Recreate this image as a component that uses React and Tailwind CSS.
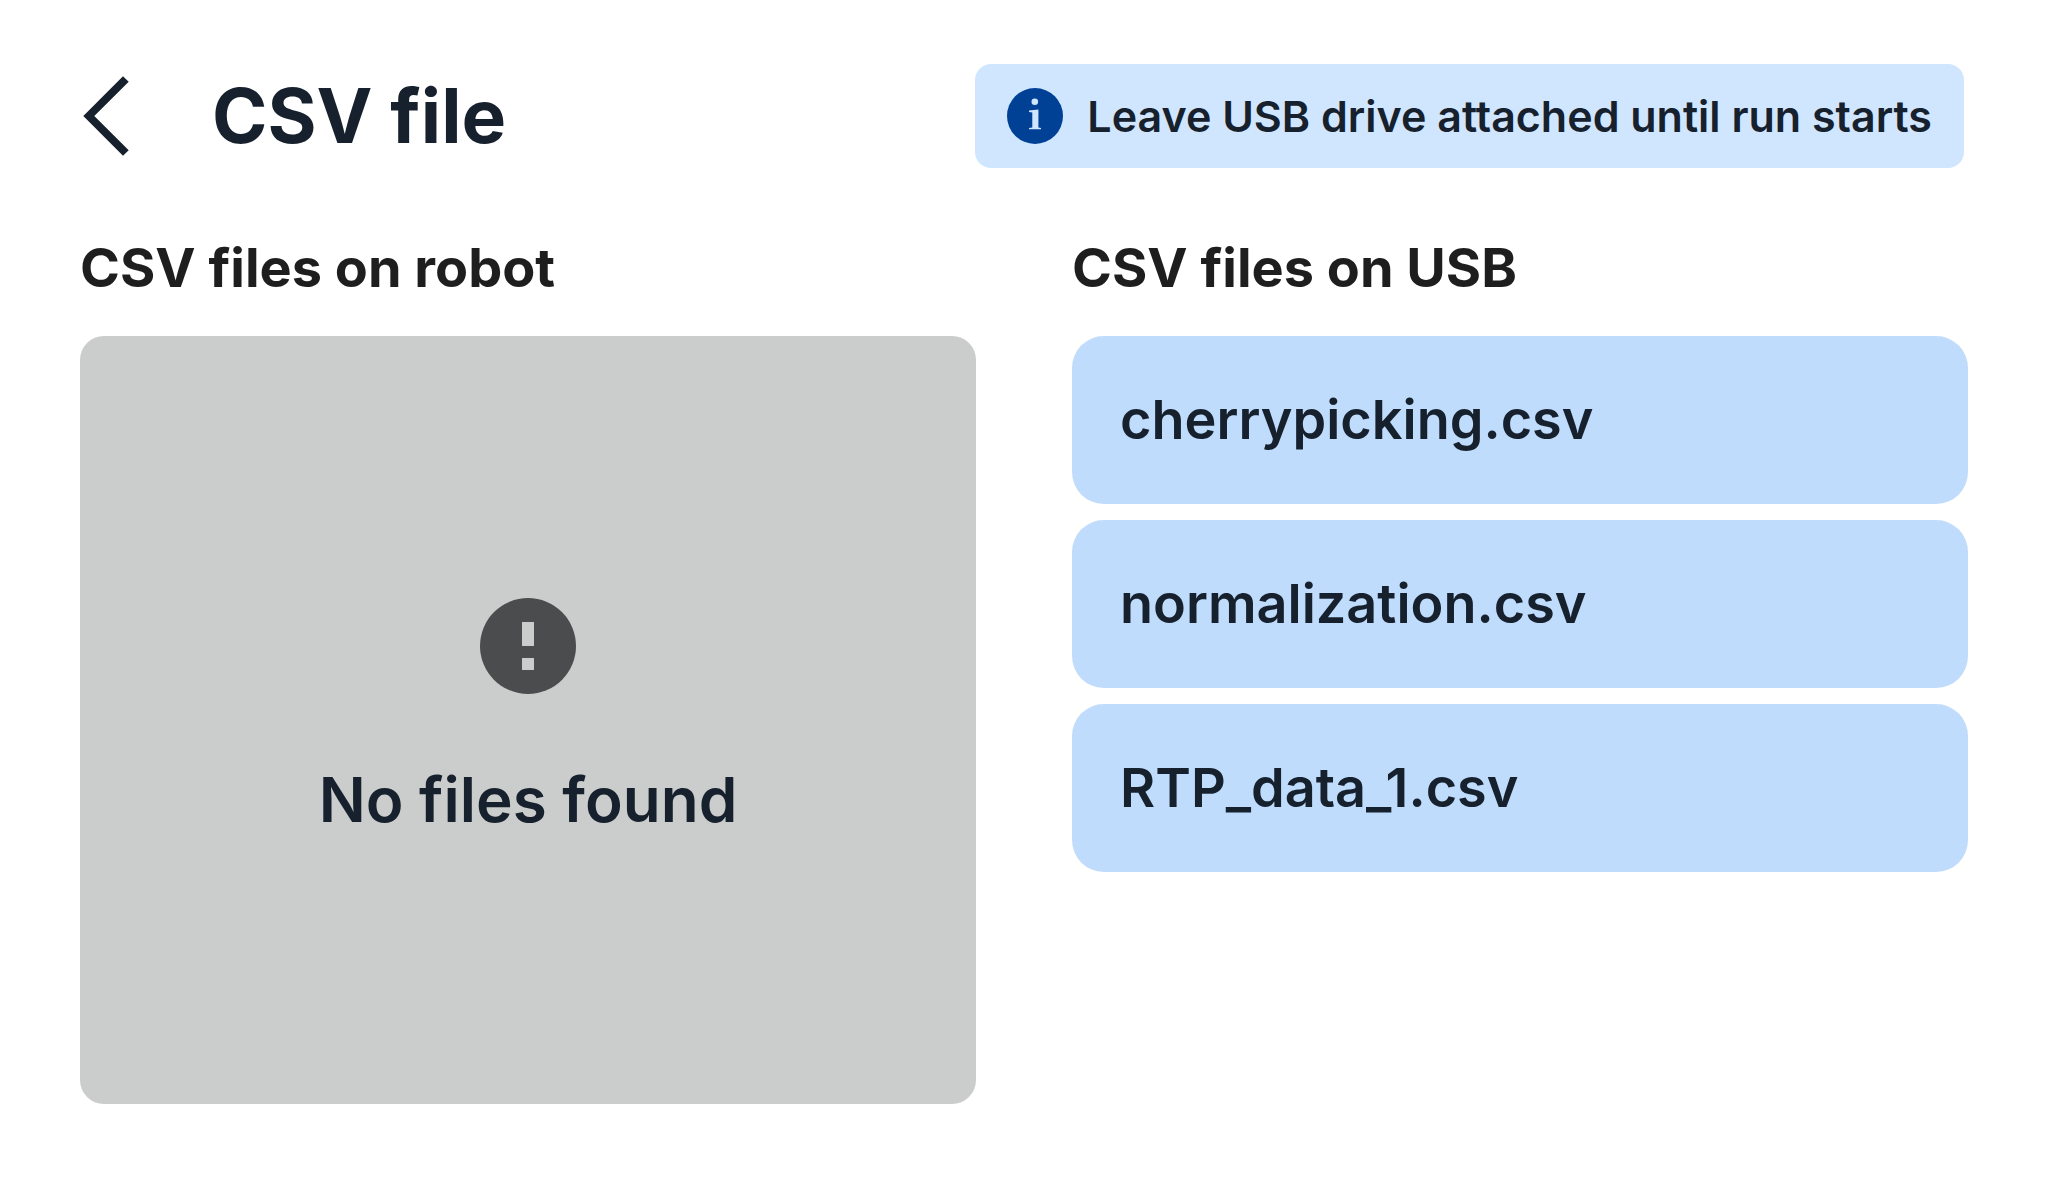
const usbFiles = ['cherrypicking.csv', 'normalization.csv', 'RTP_data_1.csv'];

function ChevronLeft() {
  return (
    <svg className="h-24 w-24" viewBox="0 0 96 96" fill="#16212d" aria-hidden="true">
      <path d="M43 8.3 48.7 13.8 14.3 48 48.7 82.2 43 87.7 3.3 48Z" />
    </svg>
  );
}

function InfoIcon() {
  return (
    <svg className="size-14 shrink-0" viewBox="0 0 56 56" aria-hidden="true">
      <circle cx="28" cy="28" r="28" fill="#004196" />
      <g fill="#d0e6ff">
        <circle cx="27.8" cy="13.8" r="3.3" />
        <path d="M22 22.6 31.4 21.6V39.4L34 40V41.2H22V40L25.3 39.4V24.6L22 24Z" />
      </g>
    </svg>
  );
}

function AlertIcon() {
  return (
    <svg className="size-24" viewBox="0 0 96 96" aria-hidden="true">
      <circle cx="48" cy="48" r="48" fill="#4a4c4e" />
      <path d="M42 24h12v24H42zM42 60h12v12H42z" fill="#cbcccc" />
    </svg>
  );
}

export default function App() {
  return (
    <main className="flex min-h-screen flex-col bg-white px-20 pt-16 pb-20 font-['Inter',sans-serif] text-[#16212d]">
      <header className="mb-16 flex items-center justify-between pr-1">
        <div className="flex items-center gap-9">
          <button type="button" aria-label="Back">
            <ChevronLeft />
          </button>
          <h1 className="text-[75px] leading-[96px] font-bold">CSV file</h1>
        </div>
        <div role="status" className="flex items-center gap-6 rounded-2xl bg-[#d0e6ff] px-8 py-6">
          <InfoIcon />
          <p className="text-[43px] leading-14 font-semibold">Leave USB drive attached until run starts</p>
        </div>
      </header>
      <div className="grid flex-1 grid-cols-2 gap-24">
        <section className="flex flex-col gap-8">
          <h2 className="text-[54px] leading-[72px] font-bold text-[#1e1e1e]">CSV files on robot</h2>
          <div className="flex flex-1 flex-col items-center justify-center gap-16 rounded-3xl bg-[#cbcccc]">
            <AlertIcon />
            <p className="text-[62px] leading-[84px] font-semibold">No files found</p>
          </div>
        </section>
        <section className="flex flex-col gap-8">
          <h2 className="text-[54px] leading-[72px] font-bold text-[#1e1e1e]">CSV files on USB</h2>
          <ul className="flex flex-col gap-4">
            {usbFiles.map((name) => (
              <li key={name}>
                <button
                  type="button"
                  className="w-full rounded-4xl bg-[#bfdcfd] p-12 text-left text-[54px] leading-[72px] font-semibold"
                >
                  {name}
                </button>
              </li>
            ))}
          </ul>
        </section>
      </div>
    </main>
  );
}
